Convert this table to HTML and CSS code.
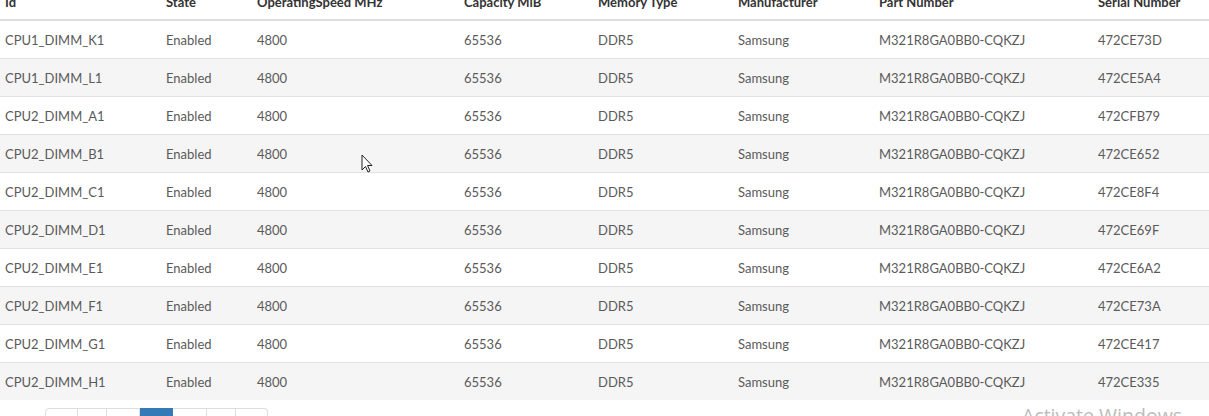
FILE: index.html
```html
<!DOCTYPE html>
<html>
<head>
<meta charset="utf-8">
<link rel="stylesheet" href="styles.css">
</head>
<body>
<div class="page">
  <table class="grid">
    <colgroup>
      <col class="c1"><col class="c2"><col class="c3"><col class="c4"><col class="c5"><col class="c6"><col class="c7"><col class="c8">
    </colgroup>
    <thead>
      <tr><th>Id</th><th>State</th><th>OperatingSpeed MHz</th><th>Capacity MiB</th><th>Memory Type</th><th>Manufacturer</th><th>Part Number</th><th>Serial Number</th></tr>
    </thead>
    <tbody>
      <tr><td>CPU1_DIMM_K1</td><td>Enabled</td><td>4800</td><td>65536</td><td>DDR5</td><td>Samsung</td><td>M321R8GA0BB0-CQKZJ</td><td>472CE73D</td></tr>
      <tr><td>CPU1_DIMM_L1</td><td>Enabled</td><td>4800</td><td>65536</td><td>DDR5</td><td>Samsung</td><td>M321R8GA0BB0-CQKZJ</td><td>472CE5A4</td></tr>
      <tr><td>CPU2_DIMM_A1</td><td>Enabled</td><td>4800</td><td>65536</td><td>DDR5</td><td>Samsung</td><td>M321R8GA0BB0-CQKZJ</td><td>472CFB79</td></tr>
      <tr><td>CPU2_DIMM_B1</td><td>Enabled</td><td>4800</td><td>65536</td><td>DDR5</td><td>Samsung</td><td>M321R8GA0BB0-CQKZJ</td><td>472CE652</td></tr>
      <tr><td>CPU2_DIMM_C1</td><td>Enabled</td><td>4800</td><td>65536</td><td>DDR5</td><td>Samsung</td><td>M321R8GA0BB0-CQKZJ</td><td>472CE8F4</td></tr>
      <tr><td>CPU2_DIMM_D1</td><td>Enabled</td><td>4800</td><td>65536</td><td>DDR5</td><td>Samsung</td><td>M321R8GA0BB0-CQKZJ</td><td>472CE69F</td></tr>
      <tr><td>CPU2_DIMM_E1</td><td>Enabled</td><td>4800</td><td>65536</td><td>DDR5</td><td>Samsung</td><td>M321R8GA0BB0-CQKZJ</td><td>472CE6A2</td></tr>
      <tr><td>CPU2_DIMM_F1</td><td>Enabled</td><td>4800</td><td>65536</td><td>DDR5</td><td>Samsung</td><td>M321R8GA0BB0-CQKZJ</td><td>472CE73A</td></tr>
      <tr><td>CPU2_DIMM_G1</td><td>Enabled</td><td>4800</td><td>65536</td><td>DDR5</td><td>Samsung</td><td>M321R8GA0BB0-CQKZJ</td><td>472CE417</td></tr>
      <tr><td>CPU2_DIMM_H1</td><td>Enabled</td><td>4800</td><td>65536</td><td>DDR5</td><td>Samsung</td><td>M321R8GA0BB0-CQKZJ</td><td>472CE335</td></tr>
    </tbody>
  </table>
  <ul class="pager">
    <li class="w33">«</li><li class="w29">‹</li><li class="w33">1</li><li class="w33 active">2</li><li class="w34">3</li><li class="w29">›</li><li class="w32">»</li>
  </ul>
</div>
<div class="watermark">Activate Windows</div>
<svg class="cursor" width="13" height="20" viewBox="0 0 13 20"><path d="M1 1 L1 16 L4.5 12.5 L7 18 L9 17 L6.5 11.5 L11 11.5 Z" fill="#fff" stroke="#222" stroke-width="1" stroke-linejoin="miter"/></svg>
</body>
</html>
```
FILE: styles.css
```css
html, body {
  margin: 0;
  padding: 0;
  background: #fff;
  overflow: hidden;
}
body {
  font-family: "Lato", "Noto Sans", sans-serif;
  font-size: 13px;
  color: #5a5a5a;
  width: 1209px;
  height: 416px;
  position: relative;
}
.page {
  margin-top: -18px;
}
.grid {
  border-collapse: collapse;
  table-layout: fixed;
  width: 1209px;
}
.c1 { width: 161px; }
.c2 { width: 91px; }
.c3 { width: 207px; }
.c4 { width: 134px; }
.c5 { width: 140px; }
.c6 { width: 141px; }
.c7 { width: 219px; }
.c8 { width: 116px; }
.grid th {
  text-align: left;
  color: #333;
  height: 38px;
  box-sizing: border-box;
  padding: 0 5px 8px;
  line-height: 18px;
  border-bottom: 2px solid #dedede;
  vertical-align: bottom;
  white-space: nowrap;
  font-weight: bold;
}
.grid td {
  height: 37px;
  padding: 0 5px;
  border-top: 1px solid #e2e2e2;
  vertical-align: middle;
  white-space: nowrap;
}
.grid tbody tr:first-child td {
  border-top: none;
  height: 37px;
}
.grid tbody tr:nth-child(even) td {
  background: #f5f5f5;
}
.pager {
  list-style: none;
  display: flex;
  margin: 8px 0 0 45px;
  padding: 0;
}
.pager li {
  height: 32px;
  box-sizing: border-box;
  border: 1px solid #ddd;
  border-left: none;
  display: flex;
  align-items: center;
  justify-content: center;
  color: #337ab7;
}
.pager li:first-child {
  border-left: 1px solid #ddd;
  border-radius: 4px 0 0 4px;
}
.pager li:last-child {
  border-radius: 0 4px 4px 0;
}
.pager li.active {
  background: #337ab7;
  border-color: #337ab7;
  color: #fff;
}
.w33 { width: 33px; }
.w29 { width: 29px; }
.w34 { width: 34px; }
.w32 { width: 32px; }
.watermark {
  position: absolute;
  left: 1022px;
  top: 402px;
  font-family: "Open Sans", "Noto Sans", sans-serif;
  font-size: 19.5px;
  color: #bcbcbc;
  white-space: nowrap;
}
.cursor {
  position: absolute;
  left: 361px;
  top: 154px;
}
```
